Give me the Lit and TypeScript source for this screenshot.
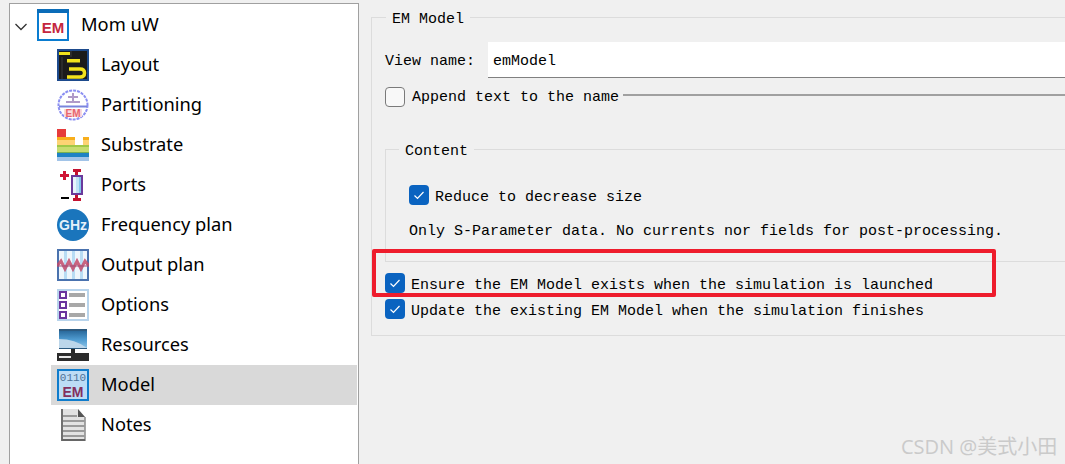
import { LitElement, html, css, svg } from "lit";
import { customElement } from "lit/decorators.js";

const wrap = (c: unknown) => html`<svg class="ico" viewBox="0 0 32 32" width="32" height="32">${c}</svg>`;

const ICONS: Record<string, unknown> = {
  em: wrap(svg`
    <rect x="1" y="1" width="30" height="30" fill="#fff" stroke="#0a7cd0" stroke-width="2"/>
    <rect x="0" y="0" width="32" height="4" fill="#0a6cb8"/>
    <text x="16" y="24" text-anchor="middle" class="ib" font-size="15" fill="#c4263e">EM</text>`),
  layout: wrap(svg`
    <rect x="1" y="1" width="30" height="30" fill="#1b1b1b" stroke="#1d4a8c" stroke-width="2"/>
    <rect x="2" y="3" width="11" height="3" fill="#f2e21c"/>
    <rect x="10" y="10" width="13" height="3.500" fill="#f2e21c"/>
    <path d="M12 20H23Q27.500 20 27.500 24T23 28H10" fill="none" stroke="#f2e21c" stroke-width="3.500"/>
    <path d="M5 8V30M14 2V8" stroke="#3c3c3c" stroke-width="1"/>`),
  part: wrap(svg`
    <circle cx="16" cy="16" r="14.500" fill="#fff" stroke="#8b8ff2" stroke-width="2" stroke-dasharray="3 1"/>
    <path d="M2 17.500H30" stroke="#7a85dc" stroke-width="2"/>
    <path d="M11 8H21M16 4V14M9 13H23" stroke="#b09ac8" stroke-width="2"/>
    <rect x="7" y="20" width="18" height="8" fill="#fbdcdc"/>
    <text x="16" y="28" text-anchor="middle" class="ib" font-size="10" fill="#e8646e">EM</text>`),
  substrate: wrap(svg`
    <g shape-rendering="crispEdges">
    <rect x="0" y="0" width="9" height="8" fill="#e63b3b"/>
    <rect x="0" y="8" width="18" height="3" fill="#f8ae1c"/>
    <rect x="26" y="8" width="6" height="3" fill="#f8ae1c"/>
    <rect x="0" y="11" width="18" height="5" fill="#fdd374"/>
    <rect x="26" y="11" width="6" height="5" fill="#fdd374"/>
    <rect x="0" y="16" width="32" height="2" fill="#a0c848"/>
    <rect x="0" y="18" width="32" height="5" fill="#c6dc70"/>
    <rect x="0" y="23" width="32" height="1" fill="#78b050"/>
    <rect x="0" y="24" width="32" height="4" fill="#1f82c4"/>
    <rect x="0" y="28" width="32" height="4" fill="#a2c4e8"/>
    </g>`),
  ports: wrap(svg`
    <g shape-rendering="crispEdges">
    <rect x="3" y="5" width="9" height="3" fill="#cf1535"/>
    <rect x="6" y="2" width="3" height="9" fill="#cf1535"/>
    <rect x="16" y="0" width="8" height="3" fill="#c41230"/>
    <rect x="18" y="3" width="3" height="3" fill="#c41230"/>
    <rect x="14" y="6" width="12" height="20" fill="#6a3a9c"/>
    <rect x="16" y="8" width="3" height="16" fill="#e6f4fc"/>
    <rect x="19" y="8" width="3" height="16" fill="#bfe2f6"/>
    <rect x="22" y="8" width="2" height="16" fill="#84c6ec"/>
    <rect x="18" y="26" width="3" height="3" fill="#c41230"/>
    <rect x="16" y="29" width="8" height="3" fill="#c41230"/>
    <rect x="4" y="28" width="8" height="2" fill="#000"/>
    </g>`),
  ghz: wrap(svg`
    <circle cx="16" cy="16" r="16" fill="#1a75bc"/>
    <text x="16" y="21" text-anchor="middle" class="ib" font-size="14" fill="#e4f0fa">GHz</text>`),
  output: wrap(svg`
    <g shape-rendering="crispEdges">
    <rect x="0" y="0" width="32" height="32" fill="#4a72ae"/>
    <rect x="2" y="2" width="28" height="28" fill="#eef6fc"/>
    <rect x="7" y="2" width="3" height="28" fill="#b8dcf4"/>
    <rect x="15" y="2" width="3" height="28" fill="#b8dcf4"/>
    <rect x="23" y="2" width="3" height="28" fill="#b8dcf4"/>
    </g>
    <path d="M0 17L4 12L8 20L12 12L16 20L20 12L24 20L28 12L32 17" fill="none" stroke="#c24a6a" stroke-width="3" opacity=".85"/>
    <path d="M0 17H32" stroke="#a05078" stroke-width="2" opacity=".5"/>`),
  options: wrap(svg`
    <g shape-rendering="crispEdges">
    <rect x="1" y="1" width="30" height="30" fill="#fff" stroke="#b8d4ec" stroke-width="2"/>
    ${[2, 12, 22].map(
      (y) => svg`
      <rect x="3" y="${y + 1}" width="6" height="6" fill="#fff" stroke="#6a359e" stroke-width="2"/>
      <rect x="12" y="${y + 2}" width="16" height="4" fill="#a8a8a8"/>`
    )}
    </g>`),
  resources: wrap(svg`
    <defs><linearGradient id="sc" x1="0" y1="0" x2="0" y2="1"><stop offset="0" stop-color="#2a6a9c"/><stop offset=".5" stop-color="#4f9bd0"/><stop offset="1" stop-color="#8cc4e8"/></linearGradient></defs>
    <rect x="2" y="0" width="28" height="20" fill="#2c5a80"/>
    <rect x="2" y="2" width="28" height="17" fill="url(#sc)"/>
    <path d="M2 10Q18 10 30 19H2Z" fill="#bcd6ea"/>
    <g shape-rendering="crispEdges">
    <rect x="14" y="20" width="4" height="5" fill="#2a2a2a"/>
    <rect x="0" y="24" width="32" height="8" fill="#2c2c2c"/>
    <rect x="2" y="27" width="12" height="2" fill="#e8e8e8"/>
    </g>`),
  model: wrap(svg`
    <rect x="1" y="1" width="30" height="30" fill="#bcdcf6" stroke="#0f7ccc" stroke-width="2"/>
    <text x="16" y="11.500" text-anchor="middle" class="im" font-size="11" fill="#4f7296">0110</text>
    <text transform="translate(16 28) scale(1 1.100)" text-anchor="middle" class="ib" font-size="14" fill="#84305f">EM</text>`),
  notes: wrap(svg`
    <path d="M5 0H21L28 8V32H5Z" fill="#e2e2e2" stroke="none"/>
    <path d="M21 0V8H28Z" fill="#555"/>
    <path d="M5 0V32" stroke="#707070" stroke-width="2"/>
    <path d="M28 8V32" stroke="#8a8a8a" stroke-width="1.500"/>
    <path d="M6 7H20M6 12H28M6 17H28M6 22H28M6 27H28" stroke="#9a9a9a" stroke-width="2"/>
    <path d="M5 31H28" stroke="#666" stroke-width="2"/>`),
};

const ITEMS = [
  ["layout", "Layout"],
  ["part", "Partitioning"],
  ["substrate", "Substrate"],
  ["ports", "Ports"],
  ["ghz", "Frequency plan"],
  ["output", "Output plan"],
  ["options", "Options"],
  ["resources", "Resources"],
  ["model", "Model"],
  ["notes", "Notes"],
];

const check = (on: boolean) => html`<span class="cb ${on ? "on" : ""}">
  ${on ? html`<svg viewBox="0 0 20 20" width="20" height="20"><path d="M5.500 10.500L8.500 13.500L14.500 7" fill="none" stroke="#fff" stroke-width="1.200"/></svg>` : ""}
</span>`;

@customElement("app-root")
export class AppRoot extends LitElement {
  static styles = css`
    :host {
      display: flex;
      position: relative;
      width: 1065px;
      height: 464px;
      overflow: hidden;
      background: #f0f0f0;
      font-family: "Liberation Mono", monospace;
      font-size: 15px;
      color: #000;
    }
    .tree {
      flex: none;
      box-sizing: border-box;
      width: 350px;
      height: 461px;
      margin: 3px 0 0 9px;
      padding-top: 1px;
      background: #fff;
      border: 1px solid #a0a0a0;
      border-bottom: none;
      font-family: "Noto Sans", sans-serif;
      font-size: 18.3px;
    }
    .row {
      display: flex;
      align-items: center;
      height: 40px;
      gap: 12px;
    }
    .row span {
      padding-bottom: 4px;
    }
    .root {
      padding-left: 5px;
    }
    .root .chev {
      flex: none;
      width: 12px;
      height: 8px;
      margin-right: -2px;
      margin-top: 3px;
    }
    .child {
      margin-left: 41px;
      width: 306px;
      padding-left: 6px;
      box-sizing: border-box;
    }
    .child.sel {
      background: #d9d9d9;
    }
    .ico {
      flex: none;
      display: block;
    }
    .ib {
      font-family: "Liberation Sans", sans-serif;
      font-weight: 700;
    }
    .im {
      font-family: "Liberation Mono", monospace;
      font-weight: 400;
    }
    .main {
      flex: none;
      width: 780px;
      padding-left: 12px;
      padding-top: 7px;
    }
    fieldset {
      margin: 0;
      min-width: 0;
      border: 1px solid #dcdcdc;
      display: block;
    }
    legend {
      padding: 0 6px;
      line-height: 26px;
      height: 20px;
    }
    .outer {
      width: 760px;
      padding: 15px 0 16px 13px;
    }
    .outer > legend {
      margin-left: 1px;
    }
    .inner {
      padding: 26px 0 17px 23px;
      margin-top: 32px;
      width: 720px;
    }
    .inner > legend {
      margin-left: -10px;
    }
    .name {
      display: flex;
      align-items: center;
      gap: 13px;
    }
    .name > span {
      padding-top: 2px;
    }
    .input {
      flex: 1;
      height: 36px;
      box-sizing: border-box;
      display: flex;
      align-items: center;
      padding: 4px 0 0 5px;
      background: #fff;
      border-bottom: 1px solid #808080;
    }
    .check {
      display: flex;
      align-items: center;
      gap: 6px;
      height: 20px;
      white-space: nowrap;
    }
    .check > .txt {
      padding-top: 4px;
    }
    .cb {
      flex: none;
      box-sizing: border-box;
      width: 20px;
      height: 20px;
      border-radius: 4px;
      background: #f8f8f8;
      border: 1px solid #7a7a7a;
      display: block;
    }
    .cb.on {
      background: #0a63c0;
      border: none;
    }
    .cb svg {
      display: block;
    }
    .append {
      margin-top: 9px;
      gap: 7px;
    }
    .line {
      flex: 1;
      height: 2px;
      background: #a0a0a0;
      margin: -4px 0 0 -3px;
    }
    .note {
      margin-top: 15px;
      line-height: 24px;
      white-space: nowrap;
    }
    .ensure {
      margin-top: 11px;
    }
    .update {
      margin-top: 6px;
    }
    .redbox {
      position: absolute;
      left: 372px;
      top: 249px;
      width: 624px;
      height: 48px;
      box-sizing: border-box;
      border: 4px solid #ee1c2c;
      border-radius: 2px;
    }
    .mark {
      position: absolute;
      left: 901px;
      top: 434px;
      font-family: "Open Sans", "Noto Sans CJK SC", sans-serif;
      font-size: 20px;
      line-height: 26px;
      color: #cacaca;
      white-space: nowrap;
    }
  `;

  render() {
    return html`
      <nav class="tree">
        <div class="row root">
          <svg class="chev" viewBox="0 0 12 8"><path d="M0.500 1L6 6.500L11.500 1" fill="none" stroke="#333" stroke-width="1.300"/></svg>
          ${ICONS.em}
          <span class="label">Mom uW</span>
        </div>
        ${ITEMS.map(
          ([k, t]) => html`<div class="row child ${t === "Model" ? "sel" : ""}">
            ${ICONS[k]}<span>${t}</span>
          </div>`
        )}
      </nav>
      <section class="main">
        <fieldset class="outer">
          <legend>EM Model</legend>
          <div class="name">
            <span>View name:</span>
            <div class="input">emModel</div>
          </div>
          <div class="check append">
            ${check(false)}<span>Append text to the name</span><span class="line"></span>
          </div>
          <fieldset class="inner">
            <legend>Content</legend>
            <div class="check">${check(true)}<span class="txt">Reduce to decrease size</span></div>
            <div class="note">Only S-Parameter data. No currents nor fields for post-processing.</div>
          </fieldset>
          <div class="check ensure">${check(true)}<span class="txt">Ensure the EM Model exists when the simulation is launched</span></div>
          <div class="check update">${check(true)}<span class="txt">Update the existing EM Model when the simulation finishes</span></div>
        </fieldset>
      </section>
      <div class="redbox"></div>
      <div class="mark">CSDN @美式小田</div>
    `;
  }
}
